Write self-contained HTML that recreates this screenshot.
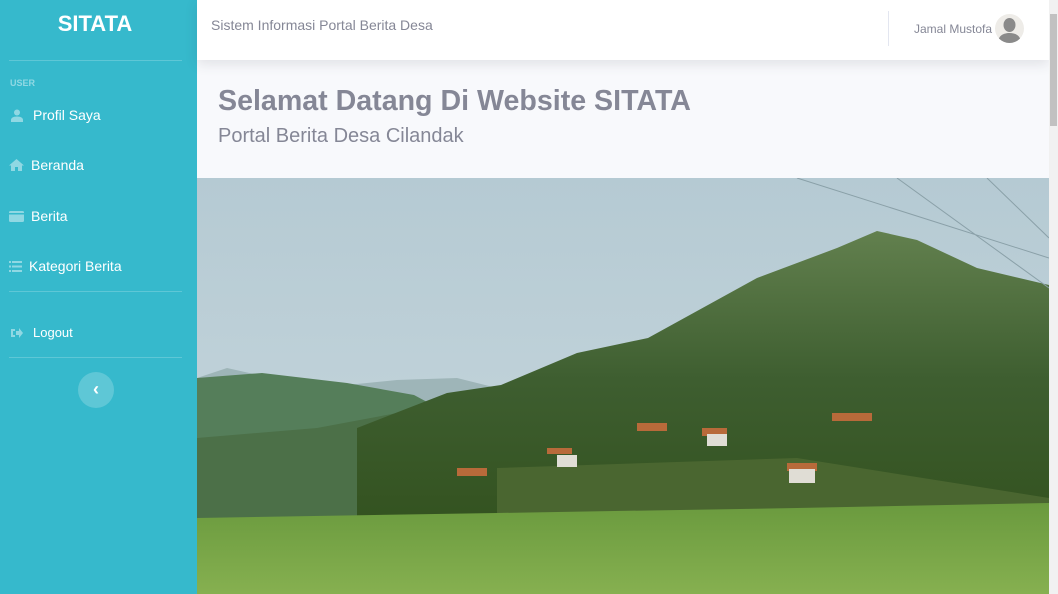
<!DOCTYPE html>
<html><head><style>
*{margin:0;padding:0;box-sizing:border-box}
body{width:1058px;height:594px;overflow:hidden;font-family:"Liberation Sans",sans-serif;background:#f8f9fc;position:relative}
.sb{position:absolute;left:0;top:0;width:197px;height:594px;background:#36b9cc;color:#fff}
.brand{position:absolute;top:11px;left:0;width:190px;text-align:center;font-weight:bold;font-size:22px}
.hr{position:absolute;left:9px;width:173px;height:1px;background:rgba(255,255,255,.2)}
.lbl{position:absolute;left:10px;top:78px;font-size:9px;font-weight:bold;color:rgba(255,255,255,.45)}
.it{position:absolute;left:9px;font-size:14px;color:#fff;display:flex;align-items:center}
.it svg{margin-right:7px}
.tog{position:absolute;left:78px;top:372px;width:36px;height:36px;border-radius:50%;background:rgba(255,255,255,.2);color:#fff;font-size:18px;text-align:center;line-height:34px;font-weight:bold}
.top{position:absolute;left:197px;top:0;width:852px;height:60px;background:#fff;box-shadow:0 4px 12px rgba(58,59,69,.12)}
.top .t{position:absolute;left:14px;top:17px;font-size:14px;color:#858796}
.top .d{position:absolute;left:691px;top:11px;width:1px;height:35px;background:#e3e6f0}
.top .n{position:absolute;left:717px;top:22px;font-size:12px;color:#858796}
.av{position:absolute;left:798px;top:14px;width:29px;height:29px;border-radius:50%;background:#eeece8;overflow:hidden}
h1{position:absolute;left:218px;top:85px;font-size:28.6px;color:#858796;font-weight:bold}
h2{position:absolute;left:218px;top:125px;font-size:20px;color:#858796;font-weight:normal}
.img{position:absolute;left:197px;top:178px;width:852px;height:416px}
.scr{position:absolute;left:1049px;top:0;width:9px;height:594px;background:#f1f1f1}
.th{position:absolute;left:1050px;top:14px;width:7px;height:112px;background:#c1c1c1}
</style></head><body>
<div class="sb">
<div class="brand">SITATA</div>
<div class="hr" style="top:60px"></div>
<div class="lbl">USER</div>
<div class="it" style="top:107px;left:11px"><svg width="12" height="13" viewBox="0 0 12 13"><circle cx="6" cy="3.5" r="3" fill="rgba(255,255,255,.45)"/><path d="M0 13v-2c0-2 2-3.5 6-3.5s6 1.5 6 3.5v2z" fill="rgba(255,255,255,.45)"/></svg><span style="margin-left:3px">Profil Saya</span></div>
<div class="it" style="top:157px"><svg width="15" height="12" viewBox="0 0 15 12"><path d="M7.5 0L0 6.5h2V12h4V8h3v4h4V6.5h2z" fill="rgba(255,255,255,.45)"/></svg>Beranda</div>
<div class="it" style="top:208px"><svg width="15" height="11" viewBox="0 0 15 11"><rect width="15" height="11" rx="1.5" fill="rgba(255,255,255,.45)"/><rect y="2" width="15" height="1.5" fill="#36b9cc"/></svg>Berita</div>
<div class="it" style="top:258px"><svg width="13" height="11" viewBox="0 0 13 11" fill="rgba(255,255,255,.45)"><rect width="2" height="2"/><rect x="3" width="10" height="2"/><rect y="4.5" width="2" height="2"/><rect x="3" y="4.5" width="10" height="2"/><rect y="9" width="2" height="2"/><rect x="3" y="9" width="10" height="2"/></svg>Kategori Berita</div>
<div class="hr" style="top:291px"></div>
<div class="it" style="top:325px;left:11px;font-size:13px"><svg width="12" height="10" viewBox="0 0 12 10" fill="rgba(255,255,255,.45)"><path d="M0 1h4v2H2v4h2v2H0z"/><path d="M5 3h3V0l4 5-4 5V7H5z"/></svg><span style="margin-left:3px">Logout</span></div>
<div class="hr" style="top:357px"></div>
<div class="tog">&lsaquo;</div>
</div>
<div class="top"><div class="t">Sistem Informasi Portal Berita Desa</div><div class="d"></div><div class="n">Jamal Mustofa</div>
<div class="av"><svg width="29" height="29" viewBox="0 0 29 29"><ellipse cx="14.5" cy="11" rx="6" ry="7" fill="#8a8a8a"/><path d="M3 29c0-7 5-10 11.5-10S26 22 26 29z" fill="#8a8a8a"/></svg></div></div>
<h1>Selamat Datang Di Website SITATA</h1>
<h2>Portal Berita Desa Cilandak</h2>
<svg class="img" viewBox="0 0 852 416" preserveAspectRatio="none">
<defs><linearGradient id="s" x1="0" y1="0" x2="0" y2="1"><stop offset="0" stop-color="#b5cad3"/><stop offset="1" stop-color="#c9d8de"/></linearGradient>
<linearGradient id="m" x1="0" y1="0" x2="0" y2="1"><stop offset="0" stop-color="#62804e"/><stop offset=".5" stop-color="#3e5e30"/><stop offset="1" stop-color="#33521f"/></linearGradient>
<linearGradient id="f" x1="0" y1="0" x2="0" y2="1"><stop offset="0" stop-color="#6a9a3e"/><stop offset="1" stop-color="#86b050"/></linearGradient></defs>
<rect width="852" height="416" fill="url(#s)"/>
<path d="M0 200L30 190L120 210L200 202L260 200L300 210V300H0z" fill="#9eb5b8"/>
<path d="M0 200L65 195L150 205L217 217L260 240L260 340H0z" fill="#557e5a"/>
<path d="M0 260L120 250L200 235L260 240V340H0z" fill="#4c7048"/>
<path d="M160 250L250 215L304 207L380 175L451 160L560 100L640 70L680 53L720 62L780 90L852 107V350H160z" fill="url(#m)"/>
<path d="M300 290L600 280L852 320V350H300z" fill="#4a6630"/>
<g fill="#b86a3a"><rect x="440" y="245" width="30" height="8"/><rect x="505" y="250" width="25" height="8"/><rect x="590" y="285" width="30" height="8"/><rect x="635" y="235" width="40" height="8"/><rect x="260" y="290" width="30" height="8"/><rect x="350" y="270" width="25" height="6"/></g>
<g fill="#e0ddd5"><rect x="510" y="256" width="20" height="12"/><rect x="592" y="291" width="26" height="14"/><rect x="360" y="277" width="20" height="12"/></g>
<path d="M0 340L300 335L600 330L852 325V416H0z" fill="url(#f)"/>
<path d="M600 0L852 80M700 0L852 110M790 0L852 60" stroke="#8aa0a8" stroke-width="1" fill="none"/>
</svg>
<div class="scr"></div><div class="th"></div>
</body></html>
